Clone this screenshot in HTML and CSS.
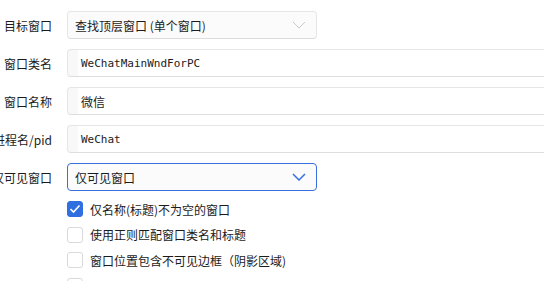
FILE: index.html
```html
<!DOCTYPE html>
<html>
<head>
<meta charset="utf-8">
<link rel="stylesheet" href="styles.css">
</head>
<body>
<div class="form">
  <div class="row">
    <div class="label">目标窗口</div>
    <div class="select">
      <span>查找顶层窗口 (单个窗口)</span>
      <svg class="chev" width="14" height="8" viewBox="0 0 14 8"><path d="M1 1 L7 7 L13 1" fill="none" stroke="#c9c9c9" stroke-width="1"/></svg>
    </div>
  </div>
  <div class="row">
    <div class="label">窗口类名</div>
    <div class="input"><span class="mono">WeChatMainWndForPC</span></div>
  </div>
  <div class="row">
    <div class="label">窗口名称</div>
    <div class="input"><span>微信</span></div>
  </div>
  <div class="row">
    <div class="label">进程名/pid</div>
    <div class="input"><span class="mono">WeChat</span></div>
  </div>
  <div class="row">
    <div class="label">仅可见窗口</div>
    <div class="select active">
      <span>仅可见窗口</span>
      <svg class="chev" width="14" height="8" viewBox="0 0 14 8"><path d="M1 1 L7 7 L13 1" fill="none" stroke="#3a6fe0" stroke-width="1.5"/></svg>
    </div>
  </div>
  <div class="checks">
    <label class="check"><span class="box on"><svg width="12" height="10" viewBox="0 0 12 10"><path d="M1.5 5 L4.5 8 L10.5 1.5" fill="none" stroke="#fff" stroke-width="1.6"/></svg></span><span>仅名称(标题)不为空的窗口</span></label>
    <label class="check"><span class="box"></span><span>使用正则匹配窗口类名和标题</span></label>
    <label class="check"><span class="box"></span><span>窗口位置包含不可见边框（阴影区域)</span></label>
    <label class="check"><span class="box"></span><span></span></label>
  </div>
</div>
</body>
</html>
```

FILE: styles.css
```css
html, body {
  margin: 0;
  padding: 0;
  background: #ffffff;
  overflow: hidden;
  width: 544px;
  height: 281px;
}
body {
  font-family: "Noto Sans CJK SC", "Noto Sans", sans-serif;
  font-size: 12px;
  color: #1b1b1b;
}
.form {
  display: flex;
  flex-direction: column;
  gap: 10px;
  padding-top: 11px;
}
.row {
  display: flex;
  align-items: center;
  gap: 15px;
  height: 28px;
}
.label {
  width: 52px;
  flex: none;
  display: flex;
  justify-content: flex-end;
  white-space: nowrap;
}
.select {
  box-sizing: border-box;
  width: 250px;
  height: 28px;
  flex: none;
  border: 1px solid #e6e6e6;
  border-bottom-color: #dcdcdc;
  border-radius: 4px;
  background: #fbfbfb;
  display: flex;
  align-items: center;
  justify-content: space-between;
  padding: 0 10px 0 7px;
}
.select.active {
  border: 1px solid #3a6fe0;
}
.chev {
  display: block;
}
.input {
  box-sizing: border-box;
  width: 520px;
  height: 28px;
  flex: none;
  border: 1px solid #e6e6e6;
  border-bottom-color: #dedede;
  border-radius: 4px;
  background: linear-gradient(to right, #f8f8f8 0, #f8f8f8 10px, #ffffff 10px);
  display: flex;
  align-items: center;
  padding-left: 13px;
}
.mono {
  font-family: "DejaVu Sans Mono", monospace;
  font-size: 11px;
}
.checks {
  display: flex;
  flex-direction: column;
  gap: 9.5px;
  padding-left: 67px;
  margin-top: 0;
}
.check {
  display: flex;
  align-items: center;
  gap: 7px;
  height: 16px;
}
.box {
  box-sizing: border-box;
  width: 16px;
  height: 16px;
  flex: none;
  border: 1px solid #d9d9d9;
  border-radius: 3px;
  background: #fff;
  display: flex;
  align-items: center;
  justify-content: center;
}
.box.on {
  background: #2f6fdf;
  border-color: #2f6fdf;
}
```
